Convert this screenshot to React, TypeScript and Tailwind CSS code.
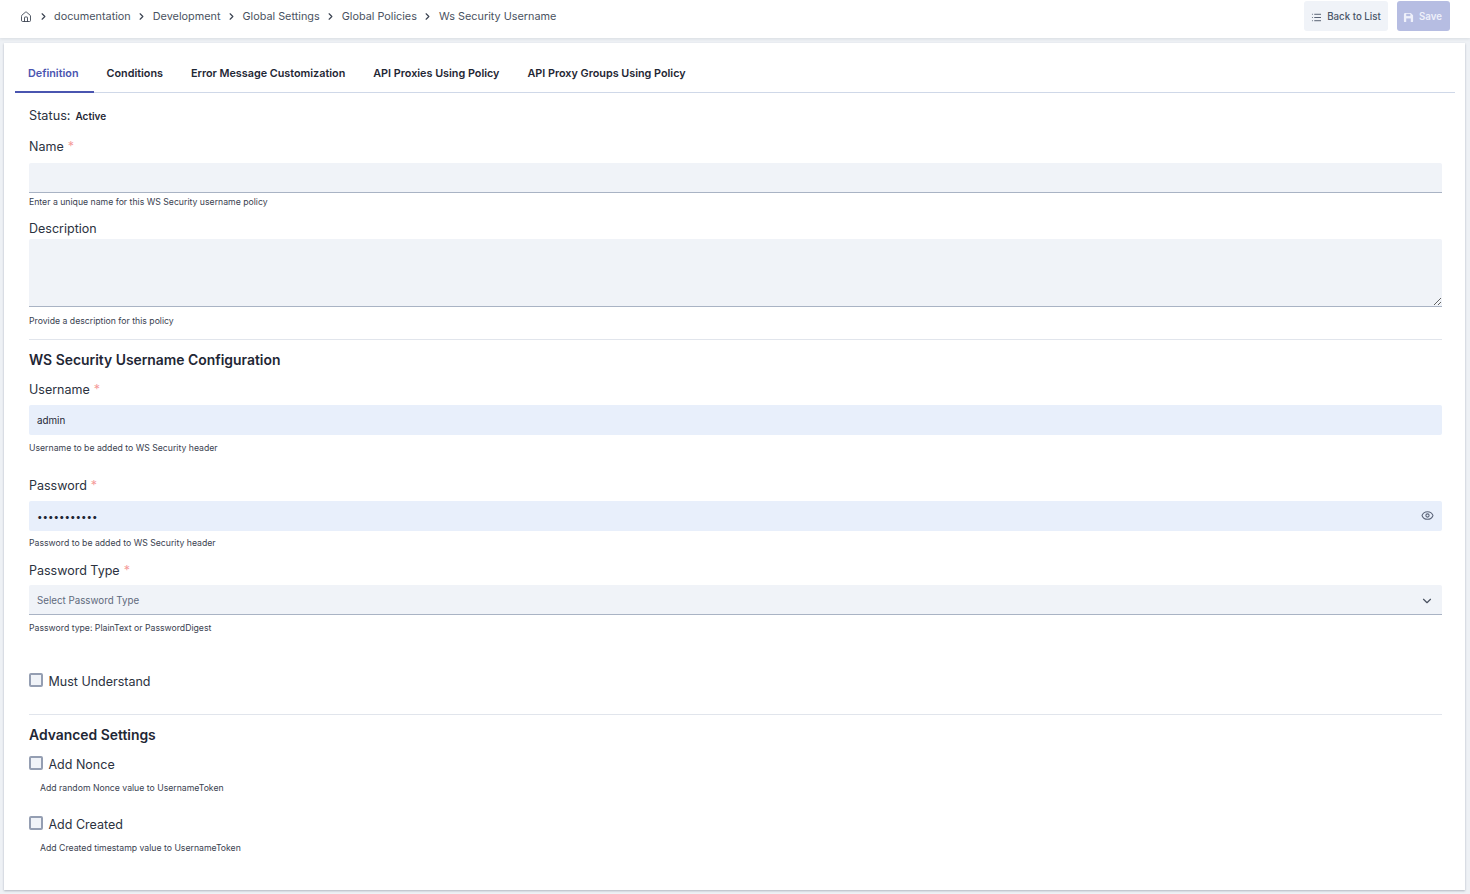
import React from "react"
import { ChevronDown, ChevronRight, Eye, House, List } from "lucide-react"

const crumbs = ["documentation", "Development", "Global Settings", "Global Policies", "Ws Security Username"]
const tabs = ["Definition", "Conditions", "Error Message Customization", "API Proxies Using Policy", "API Proxy Groups Using Policy"]

function Label({ text, required }: { text: string; required?: boolean }) {
  return (
    <label className="block h-[20px] text-[12.5px] leading-[22px] text-[#2b3240]">
      {text}
      {required && <span className="ml-1 text-[#f59a9a]">*</span>}
    </label>
  )
}

function Help({ text }: { text: string }) {
  return <p className="h-[14px] text-[8.7px] leading-[14px] text-[#3a4250]">{text}</p>
}

function Check({ text }: { text: string }) {
  return (
    <label className="flex h-[20px] items-center gap-[5.5px] text-[12.5px] text-[#2b3240]">
      <input type="checkbox" className="mb-[4px] h-[14px] w-[14px] appearance-none rounded-[2px] border-2 border-[#949eb2] bg-[#f0f3f8]" />
      <span>{text}</span>
    </label>
  )
}

export default function App() {
  return (
    <div className="h-[894px] overflow-hidden bg-[#eef1f5] font-['Inter','Liberation_Sans',sans-serif]">
      {/* breadcrumb bar */}
      <header className="flex h-[38px] items-start justify-between bg-white pl-[20px] pr-[20px] pt-[1px] shadow-[0_1px_3px_rgba(60,70,90,0.12)]">
        <nav className="flex h-[31px] items-center text-[10.85px] text-[#4a5261]">
          <House size={12} strokeWidth={1.75} className="text-[#3a4250]" />
          <ChevronRight size={11} strokeWidth={2.5} className="mx-[5.5px] text-[#3a4250]" />
          {crumbs.map((c, i) => (
            <React.Fragment key={c}>
              <span>{c}</span>
              {i < crumbs.length - 1 && <ChevronRight size={11} strokeWidth={2.5} className="mx-[5.5px] text-[#3a4250]" />}
            </React.Fragment>
          ))}
        </nav>
        <div className="flex gap-[9px]">
          <button className="flex h-[30px] w-[84px] items-center justify-center gap-[5px] rounded-[3px] bg-[#f0f3f8] pt-[2px] text-[9.7px] font-medium text-[#4a5568]">
            <List size={11} strokeWidth={2} />
            Back to List
          </button>
          <button className="flex h-[30px] w-[53px] items-center justify-center gap-[5px] rounded-[3px] bg-[#b6bde2] pr-[2px] pt-[2px] text-[9.7px] font-semibold text-[#eef0fa]">
            <svg width="11" height="11" viewBox="0 0 24 24" fill="#eef0fa">
              <path d="M5 2h12l5 5v13a2 2 0 0 1-2 2H4a2 2 0 0 1-2-2V5a3 3 0 0 1 3-3Z" />
              <rect x="7" y="4" width="9" height="5" fill="#b6bde2" />
              <rect x="7" y="14" width="10" height="8" fill="#b6bde2" />
            </svg>
            Save
          </button>
        </div>
      </header>

      {/* card */}
      <main className="mx-[4px] mt-[5px] h-[847px] w-[1461px] bg-white px-[11px] shadow-[0_1px_2px_rgba(60,70,90,0.35)]">
        <div className="flex h-[50px] w-[1440px] border-b border-[#cfd8e8]">
          {tabs.map((t, i) => (
            <div
              key={t}
              className={
                i === 0
                  ? "-mb-px flex h-[50px] items-center border-b-2 border-[#4a55b0] pl-[13px] pr-[15px] pt-[15px] text-[10.8px] font-semibold text-[#4a55b0]"
                  : "flex h-[49px] items-center pl-[13px] pr-[15px] pt-[13px] text-[10.8px] font-semibold text-[#1f2735]"
              }
            >
              {t}
            </div>
          ))}
        </div>

        <form className="ml-[14px] w-[1413px]">
          <div className="mt-[13px] flex h-[20px] items-center gap-[5px] text-[12.7px] text-[#2b3240]">
            Status:
            <span className="text-[10px] font-semibold text-[#1f2735]">Active</span>
          </div>

          <div className="mt-[10px]"><Label text="Name" required /></div>
          <input className="mt-[7px] block h-[30px] w-full rounded-t-[2px] border-b border-[#a9b3c4] bg-[#f0f3f8] px-2 outline-none" />
          <div className="mt-[2px]"><Help text="Enter a unique name for this WS Security username policy" /></div>

          <div className="mt-[9px]"><Label text="Description" /></div>
          <textarea className="mt-[1px] block h-[68px] w-full rounded-t-[2px] border-b border-[#a9b3c4] bg-[#f0f3f8] px-2 outline-none" />
          <div className="mt-[7px]"><Help text="Provide a description for this policy" /></div>

          <hr className="mt-[11px] border-[#e1e5ec]" />
          <h2 className="mt-[10px] h-[20px] text-[13.9px] font-semibold leading-[20px] text-[#1f2735]">WS Security Username Configuration</h2>

          <div className="mt-[9px]"><Label text="Username" required /></div>
          <input defaultValue="admin" className="mt-[6px] block h-[30px] w-full rounded-[2px] bg-[#e8effb] px-2 text-[9.8px] text-[#1f2735] outline-none" />
          <div className="mt-[6px]"><Help text="Username to be added to WS Security header" /></div>

          <div className="mt-[20px]"><Label text="Password" required /></div>
          <div className="relative mt-[6px]">
            <input type="password" defaultValue="adminadmin1" className="block h-[30px] w-full rounded-[2px] bg-[#e8effb] px-2 text-[9.8px] text-[#1f2735] outline-none" />
            <Eye size={13} strokeWidth={2} className="absolute right-[8px] top-[8px] text-[#5a6478]" />
          </div>
          <div className="mt-[5px]"><Help text="Password to be added to WS Security header" /></div>

          <div className="mt-[10px]"><Label text="Password Type" required /></div>
          <div className="mt-[5px] flex h-[30px] items-center justify-between rounded-t-[2px] border-b border-[#a9b3c4] bg-[#f0f3f8] pl-2 pr-[8px] pt-[2px] text-[9.75px] text-[#5f6a7c]">
            <span className="pt-[1px]">Select Password Type</span>
            <ChevronDown size={14} strokeWidth={2} className="text-[#4a5261]" />
          </div>
          <div className="mt-[6px]"><Help text="Password type: PlainText or PasswordDigest" /></div>

          <div className="mt-[37px]"><Check text="Must Understand" /></div>

          <hr className="mt-[22px] border-[#e1e5ec]" />
          <h2 className="mt-[10px] h-[20px] text-[13.9px] font-semibold leading-[20px] text-[#1f2735]">Advanced Settings</h2>

          <div className="mt-[10px]"><Check text="Add Nonce" /></div>
          <div className="ml-[11px] mt-[6px]"><Help text="Add random Nonce value to UsernameToken" /></div>

          <div className="mt-[20px]"><Check text="Add Created" /></div>
          <div className="ml-[11px] mt-[6px]"><Help text="Add Created timestamp value to UsernameToken" /></div>
        </form>
      </main>
    </div>
  )
}
